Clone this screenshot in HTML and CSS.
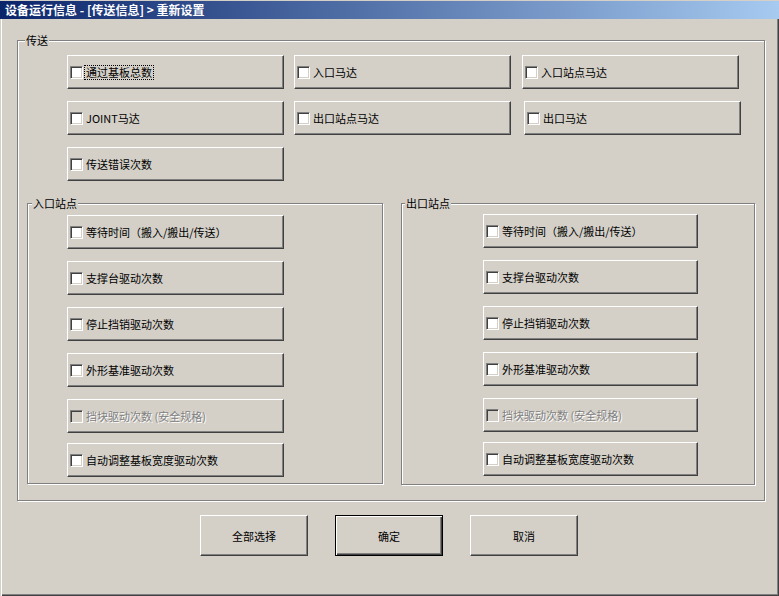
FILE: index.html
```html
<!DOCTYPE html>
<html lang="zh-CN">
<head>
<meta charset="utf-8">
<title>设备运行信息</title>
<link rel="stylesheet" href="styles.css">
</head>
<body>
<div class="window">
  <div class="titlebar">设备运行信息 - [传送信息] &gt; 重新设置</div>
  <div class="client">
    <div class="group group-main">
      <span class="legend legend-main">传送</span>
      <div class="top-grid">
        <div class="opt"><span class="cb"></span><span class="lbl focus">通过基板总数</span></div>
        <div class="opt"><span class="cb"></span><span class="lbl">入口马达</span></div>
        <div class="opt col3"><span class="cb"></span><span class="lbl">入口站点马达</span></div>
        <div class="opt"><span class="cb"></span><span class="lbl">JOINT马达</span></div>
        <div class="opt"><span class="cb"></span><span class="lbl">出口站点马达</span></div>
        <div class="opt col3b"><span class="cb"></span><span class="lbl">出口马达</span></div>
        <div class="opt"><span class="cb"></span><span class="lbl">传送错误次数</span></div>
      </div>
      <div class="stations">
        <div class="group station station-in">
          <span class="legend legend-in">入口站点</span>
          <div class="opt"><span class="cb"></span><span class="lbl">等待时间（搬入/搬出/传送）</span></div>
          <div class="opt"><span class="cb"></span><span class="lbl">支撑台驱动次数</span></div>
          <div class="opt"><span class="cb"></span><span class="lbl">停止挡销驱动次数</span></div>
          <div class="opt"><span class="cb"></span><span class="lbl">外形基准驱动次数</span></div>
          <div class="opt disabled"><span class="cb"></span><span class="lbl">挡块驱动次数 (安全规格)</span></div>
          <div class="opt last"><span class="cb"></span><span class="lbl">自动调整基板宽度驱动次数</span></div>
        </div>
        <div class="group station station-out">
          <span class="legend legend-out">出口站点</span>
          <div class="opt"><span class="cb"></span><span class="lbl">等待时间（搬入/搬出/传送）</span></div>
          <div class="opt"><span class="cb"></span><span class="lbl">支撑台驱动次数</span></div>
          <div class="opt"><span class="cb"></span><span class="lbl">停止挡销驱动次数</span></div>
          <div class="opt"><span class="cb"></span><span class="lbl">外形基准驱动次数</span></div>
          <div class="opt disabled"><span class="cb"></span><span class="lbl">挡块驱动次数 (安全规格)</span></div>
          <div class="opt last"><span class="cb"></span><span class="lbl">自动调整基板宽度驱动次数</span></div>
        </div>
      </div>
    </div>
    <div class="actions">
      <div class="act">全部选择</div>
      <div class="act default">确定</div>
      <div class="act">取消</div>
    </div>
  </div>
</div>
</body>
</html>
```
FILE: styles.css
```css
html, body {
  margin: 0;
  padding: 0;
  background: #d4d0c8;
}
body {
  font-family: "Noto Sans CJK SC", "Noto Sans", sans-serif;
  font-size: 11px;
  color: #000;
}
.window {
  width: 779px;
  height: 596px;
  box-sizing: border-box;
  border-top: 1px solid #d4d0c8;
  display: flex;
  flex-direction: column;
  overflow: hidden;
}
.titlebar {
  height: 18px;
  flex: none;
  background: linear-gradient(to right, #0a246a, #a6caf0);
  color: #fff;
  font-weight: bold;
  font-size: 12px;
  line-height: 18px;
  padding-left: 5px;
  white-space: nowrap;
}
.client {
  flex: 1;
  box-sizing: border-box;
  padding: 21px 0 0 17px;
  box-shadow: inset 1px 0 0 #d4d0c8, inset 2px 0 0 #fff,
    inset -1px -1px 0 #404040, inset -2px -2px 0 #808080;
}
.group {
  position: relative;
  box-sizing: border-box;
  border: 1px solid #808080;
  box-shadow: 1px 1px 0 #fff, inset 1px 1px 0 #fff;
}
.legend {
  position: absolute;
  top: -8px;
  padding: 0 1px;
  background: #d4d0c8;
  line-height: 14px;
  white-space: nowrap;
}
.legend-main { left: 7px; }
.legend-in { left: 4px; }
.legend-out { left: 3px; }
.group-main {
  width: 748px;
  height: 461px;
  padding: 14px 0 0 9px;
}
.top-grid {
  margin-left: 40px;
  display: grid;
  grid-template-columns: 217px 217px 217px;
  grid-auto-rows: 34px;
  column-gap: 10px;
  row-gap: 12px;
}
.col3 { margin-left: 1px; }
.col3b { margin-left: 3px; }
.opt {
  box-sizing: border-box;
  width: 217px;
  height: 34px;
  display: flex;
  align-items: center;
  padding-left: 2px;
  border: 1px solid;
  border-color: #fff #404040 #404040 #fff;
  box-shadow: inset -1px -1px 0 #808080;
  white-space: nowrap;
}
.cb {
  box-sizing: border-box;
  width: 13px;
  height: 13px;
  flex: none;
  background: #fff;
  border: 1px solid;
  border-color: #808080 #fff #fff #808080;
  box-shadow: inset 1px 1px 0 #404040, inset -1px -1px 0 #d4d0c8;
}
.lbl {
  margin-left: 1px;
  padding: 0 1px;
  border: 1px dotted transparent;
  line-height: 13px;
}
.lbl.focus { border-color: #000; }
.disabled .cb { background: #d4d0c8; }
.disabled .lbl {
  color: #808080;
  text-shadow: 1px 1px 0 #fff;
}
.stations {
  display: flex;
  align-items: flex-start;
  gap: 18px;
  margin-top: 22px;
}
.station {
  display: flex;
  flex-direction: column;
  gap: 12px;
}
.station .last { margin-top: -2px; }
.station-in {
  width: 356px;
  height: 281px;
  padding: 11px 0 0 39px;
}
.station-out {
  width: 354px;
  height: 282px;
  padding: 10px 0 0 81px;
}
.station-out .opt { width: 215px; }
.actions {
  display: flex;
  gap: 27px;
  margin: 14px 0 0 183px;
}
.act {
  box-sizing: border-box;
  width: 108px;
  height: 41px;
  display: flex;
  align-items: center;
  justify-content: center;
  border: 1px solid;
  border-color: #fff #404040 #404040 #fff;
  box-shadow: inset -1px -1px 0 #808080;
}
.act.default {
  border-color: #000;
  box-shadow: inset 1px 1px 0 #fff, inset -1px -1px 0 #404040, inset -2px -2px 0 #808080;
}
```
